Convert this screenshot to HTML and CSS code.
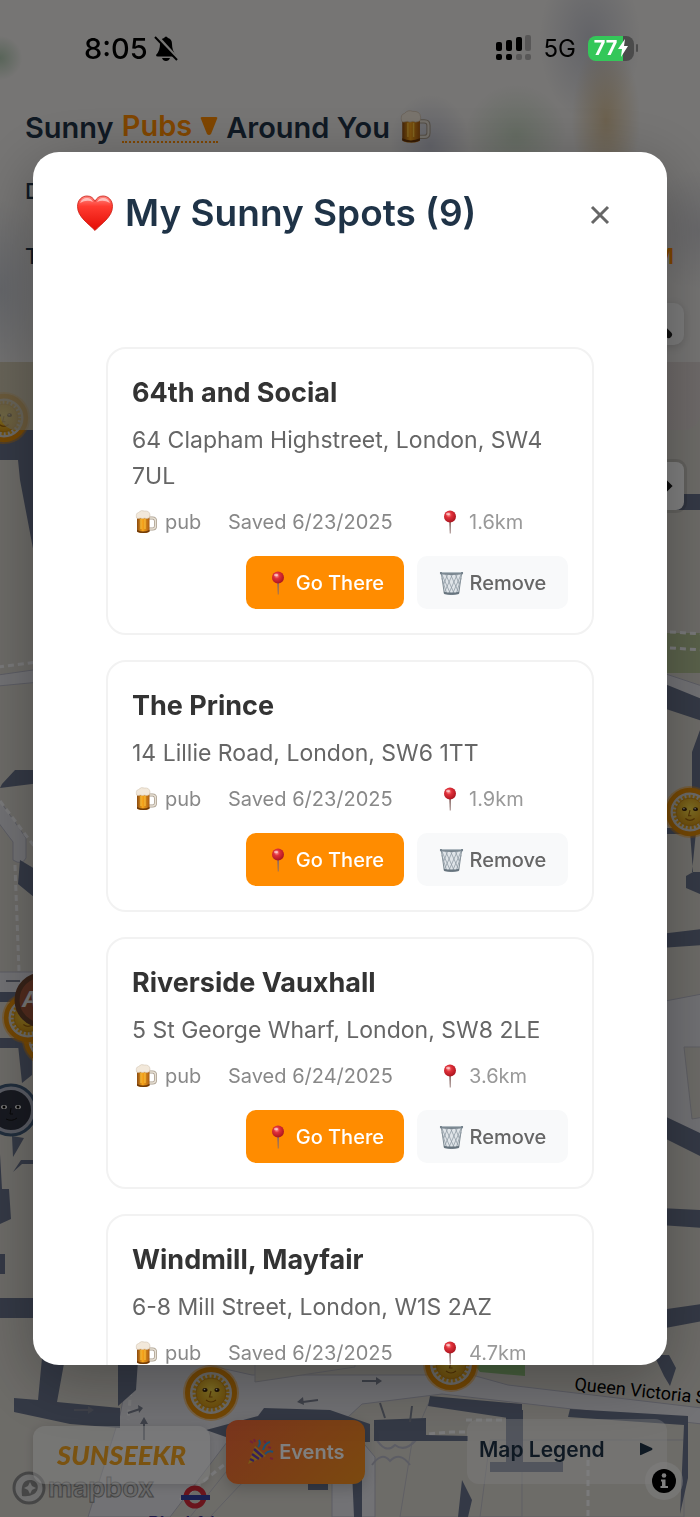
FILE: index.html
```html
<!DOCTYPE html>
<html lang="en">
<head>
  <meta charset="UTF-8">
  <meta name="viewport" content="width=device-width, initial-scale=1.0">
  <title>Sunseekr</title>
  <link rel="stylesheet" href="styles.css">
</head>

<body>
  <!-- Shared icons -->
  <svg class="defs" width="0" height="0" aria-hidden="true">
    <defs>
      <linearGradient id="beer-fill" x1="0" x2="1">
        <stop offset="0" stop-color="#8a4a10"/><stop offset=".45" stop-color="#f9a61c"/><stop offset="1" stop-color="#a85b12"/>
      </linearGradient>
      <radialGradient id="pin-fill" cx=".4" cy=".35" r=".7">
        <stop offset="0" stop-color="#ff9c98"/><stop offset=".35" stop-color="#e0303a"/><stop offset="1" stop-color="#a5121c"/>
      </radialGradient>
      <linearGradient id="heart-fill" x1="0" x2="0" y1="0" y2="1">
        <stop offset="0" stop-color="#ff8a84"/><stop offset=".3" stop-color="#ff3b30"/><stop offset="1" stop-color="#e30d05"/>
      </linearGradient>
      <radialGradient id="sun-fill" cx=".5" cy=".4" r=".6">
        <stop offset="0" stop-color="#ffe04a"/><stop offset="1" stop-color="#dc9a16"/>
      </radialGradient>
      <symbol id="beer" viewBox="0 0 24 24">
        <path d="M15 8h3.500q3 0 3 3v5q0 3-3 3H15" fill="none" stroke="#a89c8c" stroke-width="3"/>
        <path d="M15 8h3.500q3 0 3 3v5q0 3-3 3H15" fill="none" stroke="#e6dfd3" stroke-width="1.500"/>
        <path d="M3 5h12.500v16q0 2-6.250 2T3 21z" fill="url(#beer-fill)"/>
        <path d="M3 20q6 3 12.500 0v1.500q-6 3-12.500 0z" fill="#6b3708"/>
        <path d="M7 9v10M11 9v10" stroke="#ffc63f"/>
        <path d="M2.500 8Q1.500 3 4.500 2.500 7-.500 10.500 1q5-.500 5.500 4 0 3-1.500 3-2 1-4 0-2 1-4 0-3 1-4 0z" fill="#f2e8da" stroke="#cdbda8" stroke-width=".5"/>
      </symbol>
      <symbol id="pin" viewBox="0 0 24 24">
        <path d="M11.200 11h1.800l-.400 12.500h-.800z" fill="#8a6b68"/>
        <circle cx="12" cy="6.500" r="6" fill="url(#pin-fill)"/>
        <ellipse cx="10" cy="4" rx="2" ry="1.300" fill="#fff" opacity=".5"/>
      </symbol>
      <symbol id="trash" viewBox="0 0 26 26">
        <path d="M2.500 3h21l-3 21q-7.500 2-15 0z" fill="#dfe4e8" stroke="#7b8790"/>
        <path d="M3 8l5 16M3 4l9 20.500M7 4l9 20.500M12 4l8 18M17 4l4 10M23 8l-5 16M23 4l-9 20.500M19 4l-9 20.500M14 4L6 22M9 4L5 14" stroke="#8e9aa3" stroke-width=".8"/>
        <path d="M5 22q8 2 16 0l-.500 2.500q-7.500 1.500-15 0z" fill="#67747e"/>
        <path d="M1 1.500h24v2.500q-12 1.500-24 0z" fill="#76838d"/>
        <path d="M3 2.200h20" stroke="#b9c3ca"/>
      </symbol>
      <symbol id="heart" viewBox="0 0 36 36">
        <path d="M18 35.500C12 29 .500 22 .500 11.500.500 5 5 1 10 1c4 0 6.500 2 8 5.500C19.500 3 22 1 26 1c5 0 9.500 4 9.500 10.500C35.500 22 24 29 18 35.500z" fill="url(#heart-fill)" stroke="#c9190f" stroke-width=".8"/>
        <path d="M3 8q2-5 7-5 4 0 6 4-6-3-13 1zM20 7q2-4 6-4 5 0 7 5-7-4-13-1z" fill="#fff" opacity=".55"/>
      </symbol>
      <symbol id="sun" viewBox="0 0 56 56">
        <circle cx="28" cy="28" r="28" fill="#ff9500" opacity=".4"/>
        <circle cx="28" cy="28" r="23.500" fill="#d8d6d2" stroke="#e88f08" stroke-width="5"/>
        <circle cx="28" cy="28" r="16.500" fill="none" stroke="#e9a81e" stroke-width="4" stroke-dasharray="2.400 1.920"/>
        <circle cx="28" cy="28" r="15" fill="url(#sun-fill)" stroke="#c98a14" stroke-width=".8"/>
        <path d="M28 26l-1.500 6h3M23 35q5 4 10 0" fill="none" stroke="#a5660a" stroke-width="1.200"/>
        <ellipse cx="22" cy="25" rx="2.600" ry="2" fill="#3c240a"/><ellipse cx="34" cy="25" rx="2.600" ry="2" fill="#3c240a"/>
        <circle cx="21.500" cy="24.500" r=".8" fill="#fff"/><circle cx="33.500" cy="24.500" r=".8" fill="#fff"/>
      </symbol>
    </defs>
  </svg>

  <!-- Map background -->
  <svg class="map" viewBox="0 0 700 1517" preserveAspectRatio="xMidYMid slice" aria-hidden="true">
    <rect width="700" height="1517" fill="#dbd8d1"/>

    <!-- roads -->
    <g fill="#e4e4ea" stroke="#b9bac9">
      <path d="M-2 675L40 669V682L-2 686zM-2 798l28 40v20q-4 8-13 2V842L-2 822zM-2 972h50v21H-2z"/>
      <path d="M660 672l42 14v16l-42-18zM660 1002l42-8v150q-22-9-42-22z"/>
      <path d="M132 1355h30l90 20h220l36 10 194 23v16l-260-30-80 10-30 28v85H375v-60l-35-42-100 10-70 92H88l32-102z"/>
      <path d="M465 1450h15v67h-16z"/>
    </g>
    <g fill="#dbd8d1" stroke="#bfbfc8">
      <path d="M255 1357h100v10l-100 15zM428 1404l94 14v99H400l12-75zM490 1440h194v77H480zM230 1445h60l-50 40-30 32h-20l40-50zM684 1047h20v70l-12 2z"/>
    </g>
    <path d="M375 1437q10 18 20 8 10 8 22-6M372 1465q10-14 18-4 10-10 20 4" fill="none" stroke="#b9bac9" stroke-width="2"/>
    <path d="M640 633h62v40h-62z" fill="#b5c496"/>
    <path d="M470 1360h55v16l-45-4z" fill="#8fc07c"/>
    <g fill="none" stroke="#f4f4f7" stroke-width="3" stroke-dasharray="6 4">
      <path d="M-2 667l40-5M0 801l34 45M15 865l4 106M640 630l62 4M640 646l62 4M134 1360l-6 60M465 1432h-14l-70 6M588 1460v57M180 1500l60-48M466 1420h55"/>
    </g>

    <!-- shadows cast by buildings -->
    <g fill="#69738c">
      <path d="M0 430h40v50H20l-2-20H0zM20 480h18v95zM2 784l13-14h25v13L0 788zM20 860l20 12v30L18 884zM0 992h40v10H0zM0 1038h32v10H0zM18 1045h14v30l-10 8zM12 1136l12 2-8 14-3 5zM0 1154l2 35h7l2 30-11 5zM13 1172l8-12h20v4H22zM0 1254h5v20H0zM0 1298h40v20L0 1318z"/>
      <path d="M640 494h60v16h-60zM660 682l42 17v22l-42-14zM692 752l8-22v100h-8zM660 828h30v6h-30zM690 832h6l-4 40h8v22l-14-6v-12l7-4zM660 934l42-5v16l-42 3zM660 1114l42 20v23l-42-21zM660 1208l42 2v18l-42-3zM660 1310l42-6v17l-42 8z"/>
      <path d="M14 1398l24 2 4-42h23l-8 44 63 6v20l-50-4-56-12zM118 1360h20l-2 30-18 16zM206 1430l52-14 6-8 66 2 40 14v18H240z"/>
      <path d="M430 1396l92 8v16l-94-14zM374 1420l52-2v17l42 1v5h-94zM506 1410h17v62h-17zM570 1409l118 7v62l-8 36 4-89-116-8zM654 1355h15l7 13-6 18-6-10z"/>
      <path d="M490 1462h73v10h-73zM350 1425h12v92h-8zM462 1480l10 20-4 17h-10zM308 1480h20v10h-20z"/>
    </g>
    <path d="M74 1410h16M128 1413l12-4M144 1440v-18M318 1400l-15 2M362 1381h16M385 1418l-5-15M412 1406l-2 16M6 981h14" stroke="#7e8494" stroke-width="2"/>
    <path d="M88 1406l6 4-6 4zM138 1405l5 3-4 5zM140 1424l4-7 4 7zM303 1397l-6 5 7 3zM376 1377l6 4-6 4z" fill="#7e8494"/>

    <!-- markers -->
    <use href="#sun" x="-22" y="392" width="52" height="52"/>
    <use href="#sun" x="22" y="1014" width="52" height="52"/>
    <use href="#sun" x="2" y="992" width="52" height="52"/>
    <circle cx="42" cy="1000" r="25" fill="#a5583c" stroke="#6f4630" stroke-width="5"/>
    <text class="map-letter" x="22" y="1007">A</text>
    <circle cx="11" cy="1110" r="23" fill="#303442" stroke="#b4b8c8" stroke-width="6"/>
    <circle cx="11" cy="1110" r="25" fill="none" stroke="#425c7a" stroke-width="3"/>
    <ellipse cx="4" cy="1107" rx="3" ry="2" fill="#fff"/><ellipse cx="18" cy="1107" rx="3" ry="2" fill="#fff"/>
    <circle cx="4" cy="1107" r="1.500"/><circle cx="18" cy="1107" r="1.500"/>
    <path d="M11 1108l-1 6h3M6 1119q6 3 11-1" fill="none" stroke="#111"/>
    <use href="#sun" x="664" y="786" width="52" height="52"/>
    <use href="#sun" x="183" y="1365" width="56" height="56"/>
    <use href="#sun" x="423" y="1336" width="56" height="56"/>
    <text class="map-street" transform="translate(574 1390) rotate(6)">Queen Victoria Street</text>
    <circle cx="195" cy="1497" r="9" fill="none" stroke="#d52a38" stroke-width="5"/>
    <path d="M181 1495h29v5h-29z" fill="#3440a0"/>
    <text class="map-station" x="148" y="1530">Blackfriars</text>

    <!-- mapbox logo -->
    <circle cx="29" cy="1488" r="15" fill="#dcdcdc" stroke="#8c8c8c" stroke-width="3"/>
    <path d="M22 1496q-2-16 8-16c9 0 10 10 4 14q-5 3-12 2z" fill="#8c8c8c"/>
    <path d="M30 1482l2 4 4 2-4 2-2 4-2-4-4-2 4-2z" fill="#dcdcdc"/>
    <text class="map-brand" x="48" y="1497">mapbox</text>
  </svg>

  <!-- Page behind the dialog -->
  <header class="page-header">
    <h1>Sunny <a class="place-type" href="#">Pubs <svg viewBox="0 0 18 20" width="18" height="20" aria-hidden="true"><path d="M2 1h14q2 0 1 2l-6 15q-2 2-4 0L1 3Q0 1 2 1z" fill="currentColor"/></svg></a> Around You <svg class="title-icon" width="34" height="34" aria-hidden="true"><use href="#beer"/></svg></h1>
    <div class="filter-row"><span>Date</span></div>
    <div class="filter-row"><span>Time</span><span class="filter-value">8:05 PM</span></div>
    <div class="search-row">
      <button class="search-btn" aria-label="Search"><svg viewBox="0 3 30 30" width="40" height="40"><circle cx="11" cy="11" r="8" fill="none" stroke="#222" stroke-width="3"/><path d="M17 17l9 9" stroke="#222" stroke-width="5" stroke-linecap="round"/></svg></button>
    </div>
  </header>
  <div class="weather-panel"></div>
  <div class="map-tools">
    <button class="map-tool" aria-label="Find north"><svg viewBox="0 0 20 20" width="28" height="28"><path d="M10 1l9 9-9 9-9-9z" fill="#1a1a1a"/></svg></button>
  </div>

  <footer class="page-footer">
    <a class="brand" href="#">SUNSEEKR</a>
    <button class="events-btn">
      <svg viewBox="0 0 28 28" width="28" height="28" aria-hidden="true"><path d="M2 26L9 8l11 10z" fill="#f2b52d"/><path d="M6 16l7 5M8 11l9 8M4 21l4 2" stroke="#6a3fb5" stroke-width="2.500"/><path d="M12 9q3-3 1-7M17 12q2-7 7-8M19 16q4-4 8-2" fill="none" stroke="#38a0e8" stroke-width="2"/><path d="M4 3l3 2M18 3l2 2M24 20l3 1M8 1l1 3M22 9l3 1" stroke="#e8456c" stroke-width="2"/></svg>
      Events
    </button>
    <button class="legend-btn">Map Legend <svg viewBox="0 0 14 14" width="14" height="14" aria-hidden="true"><path d="M1 1.500q0-1 1-.500l11 5q1 1 0 2l-11 5q-1 .500-1-.500z" fill="currentColor"/></svg></button>
    <button class="info-btn" aria-label="Map credits"><svg viewBox="0 0 24 24" width="24" height="24"><circle cx="12" cy="12" r="12"/><circle cx="12" cy="6.500" r="2.300" fill="#fff"/><path d="M9 10.500h4.500V17H16v2H8.500v-2H10v-4.500H9z" fill="#fff"/></svg></button>
  </footer>

  <!-- Saved spots -->
  <div class="overlay">
    <section class="modal" role="dialog" aria-labelledby="modal-title">
      <div class="modal-header">
        <h2 id="modal-title"><svg width="36" height="36" aria-hidden="true"><use href="#heart"/></svg>My Sunny Spots (9)</h2>
        <button class="close-btn" aria-label="Close"><svg viewBox="0 0 20 20" width="20" height="20"><path d="M2 2l16 16M18 2L2 18" stroke="#666" stroke-width="3"/></svg></button>
      </div>

      <div class="spot-list">
        <article class="spot-card">
          <h3>64th and Social</h3>
          <p class="address">64 Clapham Highstreet, London, SW4 7UL</p>
          <div class="spot-meta">
            <span class="kind"><svg width="24" height="24"><use href="#beer"/></svg>pub</span>
            <span class="saved">Saved 6/23/2025</span>
            <span class="distance"><svg width="24" height="24"><use href="#pin"/></svg>1.6km</span>
          </div>
          <div class="spot-actions">
            <button class="go-btn"><svg width="24" height="24"><use href="#pin"/></svg>Go There</button>
            <button class="remove-btn"><svg width="25" height="26"><use href="#trash"/></svg>Remove</button>
          </div>
        </article>

        <article class="spot-card">
          <h3>The Prince</h3>
          <p class="address">14 Lillie Road, London, SW6 1TT</p>
          <div class="spot-meta">
            <span class="kind"><svg width="24" height="24"><use href="#beer"/></svg>pub</span>
            <span class="saved">Saved 6/23/2025</span>
            <span class="distance"><svg width="24" height="24"><use href="#pin"/></svg>1.9km</span>
          </div>
          <div class="spot-actions">
            <button class="go-btn"><svg width="24" height="24"><use href="#pin"/></svg>Go There</button>
            <button class="remove-btn"><svg width="25" height="26"><use href="#trash"/></svg>Remove</button>
          </div>
        </article>

        <article class="spot-card">
          <h3>Riverside Vauxhall</h3>
          <p class="address">5 St George Wharf, London, SW8 2LE</p>
          <div class="spot-meta">
            <span class="kind"><svg width="24" height="24"><use href="#beer"/></svg>pub</span>
            <span class="saved">Saved 6/24/2025</span>
            <span class="distance"><svg width="24" height="24"><use href="#pin"/></svg>3.6km</span>
          </div>
          <div class="spot-actions">
            <button class="go-btn"><svg width="24" height="24"><use href="#pin"/></svg>Go There</button>
            <button class="remove-btn"><svg width="25" height="26"><use href="#trash"/></svg>Remove</button>
          </div>
        </article>

        <article class="spot-card">
          <h3>Windmill, Mayfair</h3>
          <p class="address">6-8 Mill Street, London, W1S 2AZ</p>
          <div class="spot-meta">
            <span class="kind"><svg width="24" height="24"><use href="#beer"/></svg>pub</span>
            <span class="saved">Saved 6/23/2025</span>
            <span class="distance"><svg width="24" height="24"><use href="#pin"/></svg>4.7km</span>
          </div>
          <div class="spot-actions">
            <button class="go-btn"><svg width="24" height="24"><use href="#pin"/></svg>Go There</button>
            <button class="remove-btn"><svg width="25" height="26"><use href="#trash"/></svg>Remove</button>
          </div>
        </article>
      </div>
    </section>
  </div>

  <!-- Phone status bar -->
  <div class="status-bar">
    <span class="clock">8:05</span>
    <svg viewBox="0 0 24 26" width="24" height="26" aria-hidden="true"><path d="M2 20q4-4 4-11 0-5 4-6 2-3 4 0 4 1 4 6 0 7 4 11 0 1.500-2 1.500H4q-2 0-2-1.500zM8 23h8q-1 3-4 3t-4-3z"/><path d="M3 1l21 23" stroke="#777674" stroke-width="3"/><path d="M1 2l22 23" stroke="#000" stroke-width="2"/></svg>
    <div class="status-right">
      <svg viewBox="0 0 36 26" width="36" height="26" aria-hidden="true"><rect y="7" width="6" height="9" rx="2"/><rect x="10" y="5" width="6" height="11" rx="2"/><rect x="20" y="2" width="6" height="14" rx="2"/><rect x="29" width="6" height="16" rx="2" opacity=".25"/><rect y="19" width="6" height="6" rx="2"/><rect x="10" y="19" width="6" height="6" rx="2"/><rect x="20" y="19" width="6" height="6" rx="2" opacity=".25"/><rect x="29" y="19" width="6" height="6" rx="2" opacity=".25"/></svg>
      <span class="network">5G</span>
      <span class="battery"><span>77</span><svg viewBox="0 0 10 18" width="10" height="18" aria-hidden="true"><path d="M7 0L0 10h4l-1 8 7-11H6z" fill="#fff"/></svg></span>
    </div>
  </div>
</body>
</html>
```
FILE: styles.css
```css
* {
  box-sizing: border-box;
}

body {
  margin: 0;
  min-height: 100vh;
  display: flex;
  flex-direction: column;
  font-family: Inter, "Open Sans", sans-serif;
  color: #1f3347;
  background: #dbd8d1;
}

h1, h2, h3, p {
  margin: 0;
}

button {
  font-family: inherit;
  border: none;
  padding: 0;
  cursor: pointer;
}

a {
  text-decoration: none;
}

.defs {
  position: absolute;
}

.map {
  position: fixed;
  inset: 0;
  width: 100%;
  height: 100%;
}

.map-letter {
  font-size: 22px;
  font-weight: bold;
  font-style: italic;
  fill: #eee;
}

.map-street {
  font-family: Roboto, sans-serif;
  font-size: 18px;
  fill: #000;
}

.map-station {
  font-size: 18px;
  font-weight: 600;
  fill: #3d3590;
}

.map-brand {
  font-size: 27px;
  font-weight: bold;
  fill: #d6d6d6;
  stroke: #8c8c8c;
  stroke-width: 1px;
}

/* Page header */
.page-header {
  position: relative;
  padding: 106px 16px 0 25px;
  height: 362px;
  background:
    radial-gradient(circle at 0 58px, rgba(120, 170, 125, 0.5), transparent 22px),
    radial-gradient(ellipse 34px 80px at 606px 120px, rgba(205, 170, 110, 0.6), transparent),
    radial-gradient(ellipse 50px 80px at 590px 40px, rgba(160, 165, 185, 0.5), transparent),
    radial-gradient(ellipse 50px 50px at 516px 135px, rgba(170, 200, 165, 0.5), transparent),
    radial-gradient(ellipse 40px 50px at 430px 145px, rgba(160, 165, 190, 0.5), transparent),
    radial-gradient(ellipse 50px 90px at 0 290px, rgba(170, 178, 195, 0.5), transparent),
    radial-gradient(ellipse 60px 60px at 700px 230px, rgba(190, 190, 200, 0.5), transparent),
    #eceae8;
}

.page-header h1 {
  display: flex;
  align-items: center;
  gap: 8px;
  height: 42px;
  font-size: 29px;
  font-weight: 600;
  white-space: nowrap;
}

.place-type {
  display: flex;
  align-items: center;
  gap: 8px;
  line-height: 30px;
  color: #ff8c00;
  border-bottom: 2px dotted #ff8c00;
}

.filter-row {
  display: flex;
  justify-content: space-between;
  margin-top: 22px;
  padding-right: 10px;
  line-height: 43px;
  font-size: 22px;
  font-weight: 500;
}

.filter-value {
  color: #ff8c00;
  font-weight: 600;
}

.search-row {
  display: flex;
  justify-content: flex-end;
  margin-top: 25px;
}

.search-btn {
  display: flex;
  align-items: center;
  justify-content: center;
  width: 60px;
  height: 42px;
  border-radius: 10px;
  background: #f8f8f8;
  box-shadow: 0 2px 8px rgba(0, 0, 0, 0.15);
}

.weather-panel {
  position: relative;
  height: 68px;
  border-radius: 0 0 16px 16px;
  background: linear-gradient(90deg, rgba(205, 195, 165, 0.7), rgba(222, 212, 212, 0.8));
}

.map-tools {
  position: relative;
  display: flex;
  justify-content: flex-end;
  padding: 32px 16px 0;
}

.map-tool {
  display: flex;
  align-items: center;
  justify-content: center;
  width: 48px;
  height: 48px;
  border-radius: 8px;
  background: #fff;
  box-shadow: 0 0 0 3px rgba(0, 0, 0, 0.1);
}

/* Bottom controls */
.page-footer {
  position: relative;
  display: flex;
  align-items: flex-end;
  gap: 16px;
  margin-top: auto;
  padding: 0 33px 33px;
}

.brand {
  padding: 0 24px;
  border-radius: 12px;
  font-family: Lato, sans-serif;
  font-size: 27px;
  font-style: italic;
  font-weight: 900;
  line-height: 58px;
  color: #f5a623;
  background: rgba(255, 255, 255, 0.5);
  box-shadow: 0 2px 10px rgba(0, 0, 0, 0.15);
}

.events-btn {
  display: flex;
  align-items: center;
  justify-content: center;
  gap: 5px;
  height: 64px;
  padding: 0 20px;
  border-radius: 12px;
  font-size: 20px;
  font-weight: 600;
  color: #fff;
  background: linear-gradient(135deg, #f5693a, #f7931e);
  box-shadow: 0 4px 15px rgba(0, 0, 0, 0.2);
}

.legend-btn {
  display: flex;
  align-items: center;
  justify-content: space-between;
  width: 200px;
  height: 65px;
  margin-left: auto;
  padding: 0 14px 5px 12px;
  border-radius: 12px;
  font-size: 21px;
  font-weight: 600;
  color: #1f3347;
  background: rgba(255, 255, 255, 0.4);
}

.info-btn {
  position: absolute;
  right: 17px;
  bottom: 17px;
  display: flex;
  align-items: center;
  justify-content: center;
  width: 38px;
  height: 38px;
  border-radius: 50%;
  background: rgba(255, 255, 255, 0.5);
}

/* Dialog */
.overlay {
  position: fixed;
  inset: 0;
  z-index: 10;
  display: flex;
  padding: 152px 33px;
  background: rgba(0, 0, 0, 0.5);
}

.modal {
  flex: 1;
  display: flex;
  flex-direction: column;
  overflow: hidden;
  border-radius: 26px;
  background: #fff;
  box-shadow: 0 16px 64px rgba(0, 0, 0, 0.3);
}

.modal-header {
  display: flex;
  align-items: center;
  justify-content: space-between;
  padding: 33px 44px 32px;
}

.modal-header h2 {
  display: flex;
  align-items: center;
  gap: 12px;
  font-size: 37px;
  font-weight: 600;
  line-height: 56px;
}

.close-btn {
  display: flex;
  align-items: center;
  justify-content: center;
  width: 46px;
  height: 46px;
  padding-top: 4px;
  background: none;
}

.spot-list {
  flex: 1;
  display: flex;
  flex-direction: column;
  gap: 25px;
  padding: 74px 73px;
  overflow-y: auto;
  scrollbar-width: none;
}

.spot-card {
  flex-shrink: 0;
  padding: 24px;
  border: 2px solid #f2f2f2;
  border-radius: 20px;
}

.spot-card h3 {
  font-size: 27px;
  font-weight: 700;
  line-height: 40px;
  color: #333;
}

.address {
  margin-top: 9px;
  font-size: 23px;
  line-height: 36px;
  color: #666;
}

.spot-meta {
  display: flex;
  align-items: center;
  margin-top: 12px;
  font-size: 20px;
  line-height: 32px;
  color: #888;
}

.kind,
.distance {
  display: flex;
  align-items: center;
  gap: 7px;
}

.kind {
  width: 96px;
  padding-left: 2px;
}

.saved {
  width: 210px;
}

.distance {
  color: #999;
}

.spot-actions {
  display: flex;
  justify-content: flex-end;
  gap: 13px;
  margin-top: 18px;
}

.spot-actions button {
  display: flex;
  align-items: center;
  justify-content: center;
  gap: 6px;
  height: 53px;
  padding: 0 20px;
  border-radius: 10px;
  font-size: 20px;
  font-weight: 500;
}

.spot-actions .go-btn {
  color: #fff;
  background: #ff8c00;
}

.spot-actions .remove-btn {
  min-width: 151px;
  color: #666;
  background: #f8f9fa;
}

/* Status bar */
.status-bar {
  position: fixed;
  top: 0;
  left: 0;
  right: 0;
  z-index: 20;
  display: flex;
  align-items: center;
  gap: 6px;
  height: 96px;
  padding: 0 66px 0 84px;
  color: #000;
}

.clock {
  font-size: 29px;
  font-weight: 500;
}

.status-right {
  display: flex;
  align-items: center;
  gap: 12px;
  margin-left: auto;
}

.network {
  font-size: 24px;
}

.battery {
  position: relative;
  display: flex;
  align-items: center;
  justify-content: center;
  gap: 1px;
  width: 46px;
  height: 25px;
  border-radius: 8px;
  font-size: 20px;
  font-weight: 700;
  color: #fff;
  background: linear-gradient(90deg, #34c759 77%, #4b4b4b 77%);
}

.battery::after {
  content: "";
  position: absolute;
  right: -4px;
  width: 2px;
  height: 8px;
  border-radius: 2px;
  background: #4b4b4b;
}
```
